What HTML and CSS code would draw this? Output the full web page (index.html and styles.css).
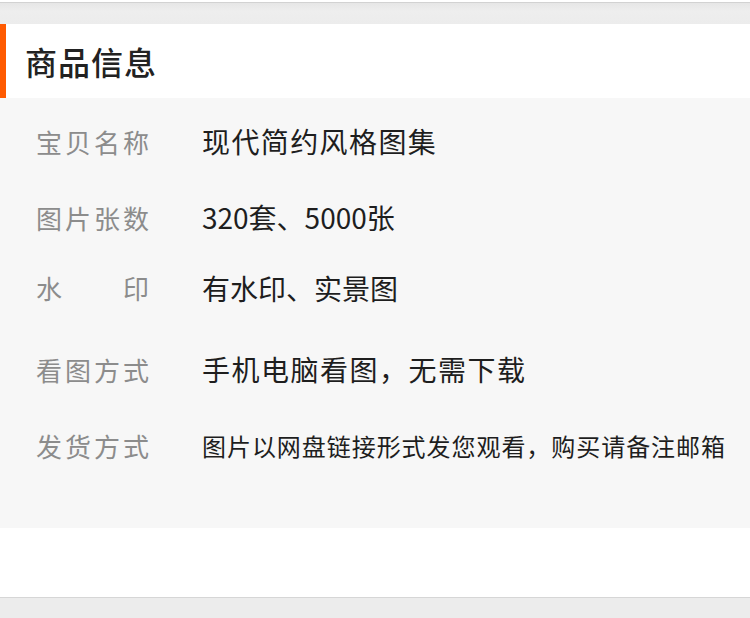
FILE: index.html
```html
<!DOCTYPE html>
<html lang="zh-CN">
<head>
	<meta charset="UTF-8">
	<title>商品信息</title>
	<link rel="stylesheet" href="styles.css">
</head>
<body>
	<div class="top-bar"></div>
	<div class="title">
		<h2>商品信息</h2>
	</div>
	<div class="info">
		<div class="row">
			<span class="label">宝贝名称</span>
			<span class="value loose">现代简约风格图集</span>
		</div>
		<div class="row">
			<span class="label">图片张数</span>
			<span class="value">320套、5000张</span>
		</div>
		<div class="row raised">
			<span class="label">水&emsp;&emsp;印</span>
			<span class="value">有水印、实景图</span>
		</div>
		<div class="row">
			<span class="label">看图方式</span>
			<span class="value wide">手机电脑看图，无需下载</span>
		</div>
		<div class="row">
			<span class="label">发货方式</span>
			<span class="value small">图片以网盘链接形式发您观看，购买请备注邮箱</span>
		</div>
	</div>
	<div class="blank"></div>
	<div class="bottom-bar"></div>
</body>
</html>
```

FILE: styles.css
```css
/*reset*/
html,body,div,h2{
	margin: 0;
	padding: 0;
}
body{
	background: #fff;
	font-family: "Noto Sans CJK SC", "Noto Sans", sans-serif;
	width: 750px;
	height: 618px;
	overflow: hidden;
}

/*bars*/
.top-bar{
	height: 21px;
	margin-top: 2px;
	border-top: 1px solid #d2d2d2;
	background: linear-gradient(#e6e6e6, #eeeeee 40%, #ececec);
}
.bottom-bar{
	height: 20px;
	border-top: 1px solid #d6d6d6;
	background: #ececec;
}

/*title*/
.title{
	height: 74px;
	display: flex;
	align-items: center;
	border-left: 6px solid #ff5a00;
	background: #fff;
}
.title h2{
	margin-left: 19px;
	font-size: 32px;
	font-weight: 500;
	color: #222;
	letter-spacing: 1px;
}

/*info list*/
.info{
	background: #f7f7f7;
	padding: 5px 0 45px;
}
.row{
	height: 76px;
	display: flex;
	align-items: center;
}
.row.raised{
	margin-top: -5px;
	height: 81px;
	align-items: flex-start;
	padding-top: 0;
}
.row.raised .label,
.row.raised .value{
	line-height: 76px;
}
.label{
	width: 166px;
	padding-left: 36px;
	font-size: 26px;
	letter-spacing: 3px;
	color: #8c8c8c;
	white-space: nowrap;
}
.value{
	font-size: 28px;
	color: #1e1e1e;
	white-space: nowrap;
}
.value.loose{letter-spacing: 1.4px;}
.value.wide{letter-spacing: 1.5px;}
.value.small{
	font-size: 24px;
	letter-spacing: 0.95px;
}

.blank{
	height: 69px;
	background: #fff;
}
```
